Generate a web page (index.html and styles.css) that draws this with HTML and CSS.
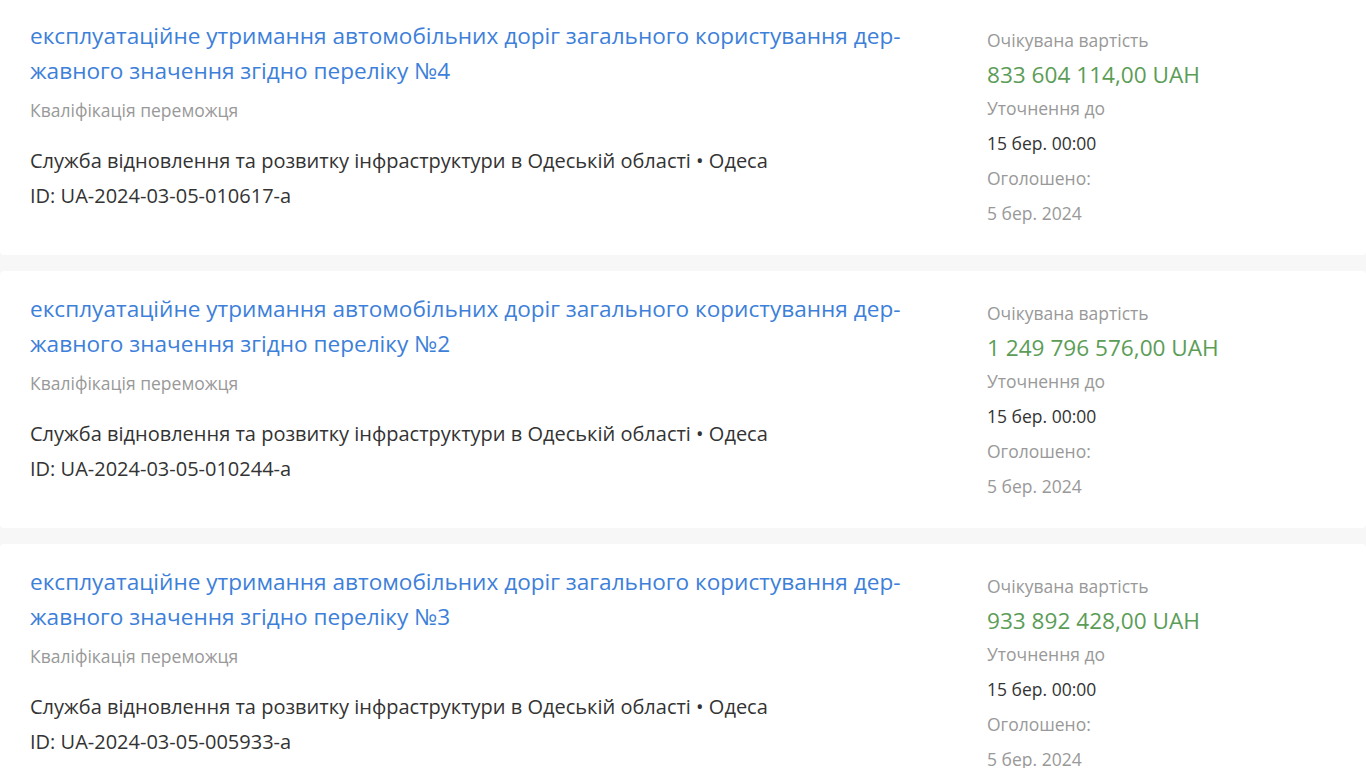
FILE: index.html
```html
<!DOCTYPE html>
<html lang="uk">
<head>
<meta charset="utf-8">
<title>Тендери</title>
<link rel="stylesheet" href="styles.css">
</head>
<body>
<div class="list">
  <div class="card">
    <div class="main">
      <a class="title" href="#">експлуатаційне утримання автомобільних доріг загального користування дер&shy;жавного значення згідно переліку №4</a>
      <div class="status">Кваліфікація переможця</div>
      <div class="org">Служба відновлення та розвитку інфраструктури в Одеській області • Одеса</div>
      <div class="org">ID: UA-2024-03-05-010617-a</div>
    </div>
    <div class="side">
      <div class="label tight">Очікувана вартість</div>
      <div class="price">833 604 114,00 UAH</div>
      <div class="label">Уточнення до</div>
      <div class="value">15 бер. 00:00</div>
      <div class="label">Оголошено:</div>
      <div class="label">5 бер. 2024</div>
    </div>
  </div>
  <div class="card">
    <div class="main">
      <a class="title" href="#">експлуатаційне утримання автомобільних доріг загального користування дер&shy;жавного значення згідно переліку №2</a>
      <div class="status">Кваліфікація переможця</div>
      <div class="org">Служба відновлення та розвитку інфраструктури в Одеській області • Одеса</div>
      <div class="org">ID: UA-2024-03-05-010244-a</div>
    </div>
    <div class="side">
      <div class="label tight">Очікувана вартість</div>
      <div class="price">1 249 796 576,00 UAH</div>
      <div class="label">Уточнення до</div>
      <div class="value">15 бер. 00:00</div>
      <div class="label">Оголошено:</div>
      <div class="label">5 бер. 2024</div>
    </div>
  </div>
  <div class="card">
    <div class="main">
      <a class="title" href="#">експлуатаційне утримання автомобільних доріг загального користування дер&shy;жавного значення згідно переліку №3</a>
      <div class="status">Кваліфікація переможця</div>
      <div class="org">Служба відновлення та розвитку інфраструктури в Одеській області • Одеса</div>
      <div class="org">ID: UA-2024-03-05-005933-a</div>
    </div>
    <div class="side">
      <div class="label tight">Очікувана вартість</div>
      <div class="price">933 892 428,00 UAH</div>
      <div class="label">Уточнення до</div>
      <div class="value">15 бер. 00:00</div>
      <div class="label">Оголошено:</div>
      <div class="label">5 бер. 2024</div>
    </div>
  </div>
</div>
</body>
</html>
```

FILE: styles.css
```css
html, body {
  margin: 0;
  padding: 0;
  background: #f7f7f7;
  font-family: "Open Sans", "Noto Sans", sans-serif;
}

.list {
  display: flex;
  flex-direction: column;
  gap: 16px;
  margin-top: -2px;
}

.card {
  background: #ffffff;
  border-radius: 4px;
  display: grid;
  grid-template-columns: 910px 1fr;
  column-gap: 47px;
  padding: 20px 0 24px 30px;
  min-height: 213px;
}

.main {
  display: flex;
  flex-direction: column;
}

.title {
  color: #3d7fd9;
  text-decoration: none;
  font-size: 22.6px;
  line-height: 35px;
  display: block;
}

.status {
  color: #999999;
  font-size: 17.5px;
  line-height: 30px;
  margin-top: 7px;
  margin-bottom: 18px;
}

.org {
  color: #333333;
  font-size: 20px;
  line-height: 35px;
}

.side {
  display: flex;
  flex-direction: column;
  padding-top: 5px;
}

.label {
  color: #999999;
  font-size: 17.5px;
  line-height: 35px;
}

.label.tight {
  line-height: 34px;
}

.price {
  color: #5b9d57;
  font-size: 22.6px;
  line-height: 32px;
  padding-top: 2px;
}

.value {
  color: #333333;
  font-size: 17.5px;
  line-height: 35px;
}
```
